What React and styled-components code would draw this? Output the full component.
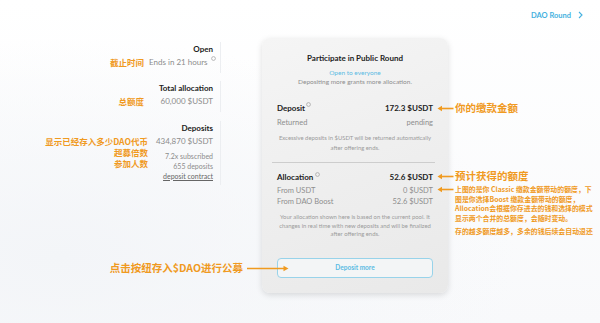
import React from 'react'
import styled, { createGlobalStyle } from 'styled-components'

const ORANGE = '#f09a1f'
const BLUE = '#45b1e0'

const GlobalStyle = createGlobalStyle`
  html, body {
    margin: 0;
    padding: 0;
  }
  body {
    font-family: Lato, "Noto Sans CJK SC", sans-serif;
  }
`

function InfoDot() {
    return (
        <Dot viewBox="0 0 6 6" width="5" height="5">
            <circle cx="3" cy="3" r="2.3" fill="none" stroke="#9a9a9a" strokeWidth="0.8" />
        </Dot>
    )
}

function LeftArrow() {
    return (
        <ArrowLeft viewBox="0 0 17 7" width="17" height="7">
            <line x1="16.5" y1="3.5" x2="3" y2="3.5" stroke={ORANGE} strokeWidth="1.6" />
            <path d="M0.5 3.5 L5 0.8 L5 6.2 Z" fill={ORANGE} />
        </ArrowLeft>
    )
}

function App() {
    return (
        <Page>
            <GlobalStyle />
            <Header>
                <RoundLink>
                    DAO Round
                    <svg viewBox="0 0 5 8" width="5" height="8">
                        <path d="M1 1 L4 4 L1 7" fill="none" stroke={BLUE} strokeWidth="1.1" />
                    </svg>
                </RoundLink>
            </Header>
            <Main>
                <LeftCol>
                    <StatRow>
                        <Annot $pad={5}>截止时间</Annot>
                        <StatBox>
                            <StatTitle>Open</StatTitle>
                            <StatValue>Ends in 21 hours <InfoDot /></StatValue>
                        </StatBox>
                    </StatRow>
                    <StatRow>
                        <Annot $pad={5}>总额度</Annot>
                        <StatBox>
                            <StatTitle>Total allocation</StatTitle>
                            <StatValue>60,000 $USDT</StatValue>
                        </StatBox>
                    </StatRow>
                    <StatRow>
                        <Annot $pad={1}>
                            显示已经存入多少DAO代币<br />
                            超募倍数<br />
                            参加人数
                        </Annot>
                        <StatBox>
                            <StatTitle>Deposits</StatTitle>
                            <StatValue>434,870 $USDT</StatValue>
                            <SmallList>
                                <div>7.2x subscribed</div>
                                <div>655 deposits</div>
                                <ContractLink>deposit contract</ContractLink>
                            </SmallList>
                        </StatBox>
                    </StatRow>
                    <Prompt>
                        <span>点击按纽存入$DAO进行公募</span>
                        <svg viewBox="0 0 42 7" width="42" height="7">
                            <line x1="0" y1="3.5" x2="37" y2="3.5" stroke={ORANGE} strokeWidth="1.6" />
                            <path d="M41.5 3.5 L36.5 0.8 L36.5 6.2 Z" fill={ORANGE} />
                        </svg>
                    </Prompt>
                </LeftCol>

                <Card>
                    <CardTitle>Participate in Public Round</CardTitle>
                    <OpenTag>Open to everyone</OpenTag>
                    <SubText>Depositing more grants more allocation.</SubText>

                    <Row $top={16.5}>
                        <RowLabel>Deposit<InfoDot /></RowLabel>
                        <RowLabel>172.3 $USDT</RowLabel>
                    </Row>
                    <Row $top={2.7}>
                        <RowLabel $muted>Returned</RowLabel>
                        <RowLabel $muted>pending</RowLabel>
                    </Row>
                    <Note $top={4} $lh={10}>
                        Excessive deposits in $USDT will be returned automatically after offering ends.
                    </Note>

                    <Divider />

                    <Row $top={8}>
                        <RowLabel>Allocation<InfoDot /></RowLabel>
                        <RowLabel>52.6 $USDT</RowLabel>
                    </Row>
                    <Row $top={2} $lh={11}>
                        <RowLabel $muted>From USDT</RowLabel>
                        <RowLabel $muted>0 $USDT</RowLabel>
                    </Row>
                    <Row $top={0} $lh={11}>
                        <RowLabel $muted>From DAO Boost</RowLabel>
                        <RowLabel $muted>52.6 $USDT</RowLabel>
                    </Row>
                    <Note $top={6} $lh={8.5}>
                        Your allocation shown here is based on the current pool. It changes in real time with new deposits and will be finalized after offering ends.
                    </Note>

                    <DepositBtn>Deposit more</DepositBtn>
                </Card>

                <RightCol>
                    <Callout $top={0}>
                        <LeftArrow />
                        你的缴款金额
                    </Callout>
                    <Callout $top={54}>
                        <LeftArrow />
                        预计获得的额度
                    </Callout>
                    <Explain>
                        <LeftArrow />
                        上图的是你 Classic 缴款金额带动的额度，下<br />
                        图是你选择Boost 缴款金额带动的额度，<br />
                        Allocation会根据你存进去的钱和选择的模式<br />
                        显示两个合并的总额度，会随时变动。
                        <ExplainLast>存的越多额度越多，多余的钱后续会自动退还</ExplainLast>
                    </Explain>
                </RightCol>
            </Main>
        </Page>
    )
}

export default App

const Page = styled.div`
    position: relative;
    width: 600px;
    height: 323px;
    overflow: hidden;
    background:
        radial-gradient(ellipse at 10% 80%, #f3f5f8 0%, rgba(243,245,248,0) 60%),
        linear-gradient(180deg, #ffffff 0%, #f8f9fb 100%);
`

const Header = styled.div`
    height: 30px;
    display: flex;
    justify-content: flex-end;
    align-items: center;
    padding-right: 17px;
`

const RoundLink = styled.div`
    display: flex;
    align-items: center;
    gap: 7px;
    color: ${BLUE};
    font-size: 7.5px;
    font-weight: 700;
`

const Main = styled.div`
    display: flex;
    align-items: flex-start;
    padding-top: 8px;
`

const LeftCol = styled.div`
    position: relative;
    z-index: 1;
    width: 221px;
    flex-shrink: 0;
    display: flex;
    flex-direction: column;
    gap: 8.5px;
    padding-top: 3.5px;
`

const StatRow = styled.div`
    display: grid;
    grid-template-columns: 1fr 72px;
`

const Annot = styled.div`
    text-align: right;
    padding-right: ${p => p.$pad}px;
    padding-top: 15px;
    color: ${ORANGE};
    font-family: "Noto Sans CJK SC", sans-serif;
    font-weight: 700;
    font-size: 8.5px;
    line-height: 11px;
    white-space: nowrap;
`

const StatBox = styled.div`
    border-right: 1px solid #eceef1;
    padding: 1px 7px 4px 0;
    text-align: right;
    line-height: 13px;
    white-space: nowrap;
`

const StatTitle = styled.div`
    font-size: 8px;
    font-weight: 700;
    color: #222;
`

const StatValue = styled.div`
    font-size: 8px;
    color: #8c8c8c;
`

const SmallList = styled.div`
    margin-top: 3px;
    font-size: 7px;
    line-height: 10px;
    color: #8c8c8c;
`

const ContractLink = styled.div`
    color: #666;
    text-decoration: underline;
`

const Dot = styled.svg`
    vertical-align: super;
    margin-left: 1.5px;
`

const Prompt = styled.div`
    margin-top: 68px;
    margin-right: -68px;
    display: flex;
    justify-content: flex-end;
    align-items: center;
    gap: 4px;
    color: ${ORANGE};
    font-family: "Noto Sans CJK SC", sans-serif;
    font-weight: 700;
    font-size: 10.5px;
    line-height: 14px;
    white-space: nowrap;
`

const Card = styled.div`
    width: 186px;
    flex-shrink: 0;
    box-sizing: border-box;
    margin-left: 41px;
    padding: 14px 15px 15px;
    border-radius: 8px;
    background: linear-gradient(160deg, #f5f5f5 0%, #eeeeee 55%, #e9e9e9 100%);
    box-shadow: 0 2px 6px rgba(0, 0, 0, 0.13);
`

const CardTitle = styled.div`
    text-align: center;
    font-size: 8px;
    font-weight: 700;
    line-height: 12px;
    color: #222;
`

const OpenTag = styled.div`
    margin-top: 3.5px;
    text-align: center;
    font-size: 6.5px;
    line-height: 9px;
    color: #5bbbe3;
`

const SubText = styled.div`
    text-align: center;
    font-size: 6.5px;
    line-height: 9px;
    color: #8e8e8e;
`

const Row = styled.div`
    display: flex;
    justify-content: space-between;
    align-items: baseline;
    margin-top: ${p => p.$top}px;
    line-height: ${p => p.$lh || 12}px;
`

const RowLabel = styled.span`
    font-size: ${p => (p.$muted ? 7.5 : 8)}px;
    font-weight: ${p => (p.$muted ? 400 : 700)};
    color: ${p => (p.$muted ? '#8e8e8e' : '#222')};
    white-space: nowrap;
`

const Note = styled.div`
    margin: ${p => p.$top}px -3px 0;
    text-align: center;
    font-size: 5.9px;
    line-height: ${p => p.$lh}px;
    color: #9b9b9b;
`

const Divider = styled.div`
    height: 1px;
    background: #cdcdcd;
    margin: 9.5px -2px 0 -5px;
`

const DepositBtn = styled.button`
    display: block;
    width: 100%;
    height: 20px;
    margin-top: 19px;
    border: 1px solid #98d3ea;
    border-radius: 4px;
    background: #f3f5f6;
    color: #5bbbe3;
    font-family: Lato, sans-serif;
    font-size: 6.5px;
    font-weight: 700;
    padding: 0;
`

const RightCol = styled.div`
    margin-left: 7px;
    padding-top: 63px;
    display: flex;
    flex-direction: column;
    color: ${ORANGE};
    font-family: "Noto Sans CJK SC", sans-serif;
    font-weight: 700;
    white-space: nowrap;
`

const Callout = styled.div`
    position: relative;
    margin-top: ${p => p.$top}px;
    font-size: 10.5px;
    line-height: 14px;
`

const Explain = styled.div`
    position: relative;
    margin-top: 2px;
    font-size: 6.9px;
    line-height: 9.5px;
`

const ExplainLast = styled.div`
    margin-top: 4px;
`

const ArrowLeft = styled.svg`
    position: absolute;
    left: -18px;
    top: 50%;
    margin-top: -3.5px;

    ${Explain} > & {
        top: 4.75px;
    }
`
